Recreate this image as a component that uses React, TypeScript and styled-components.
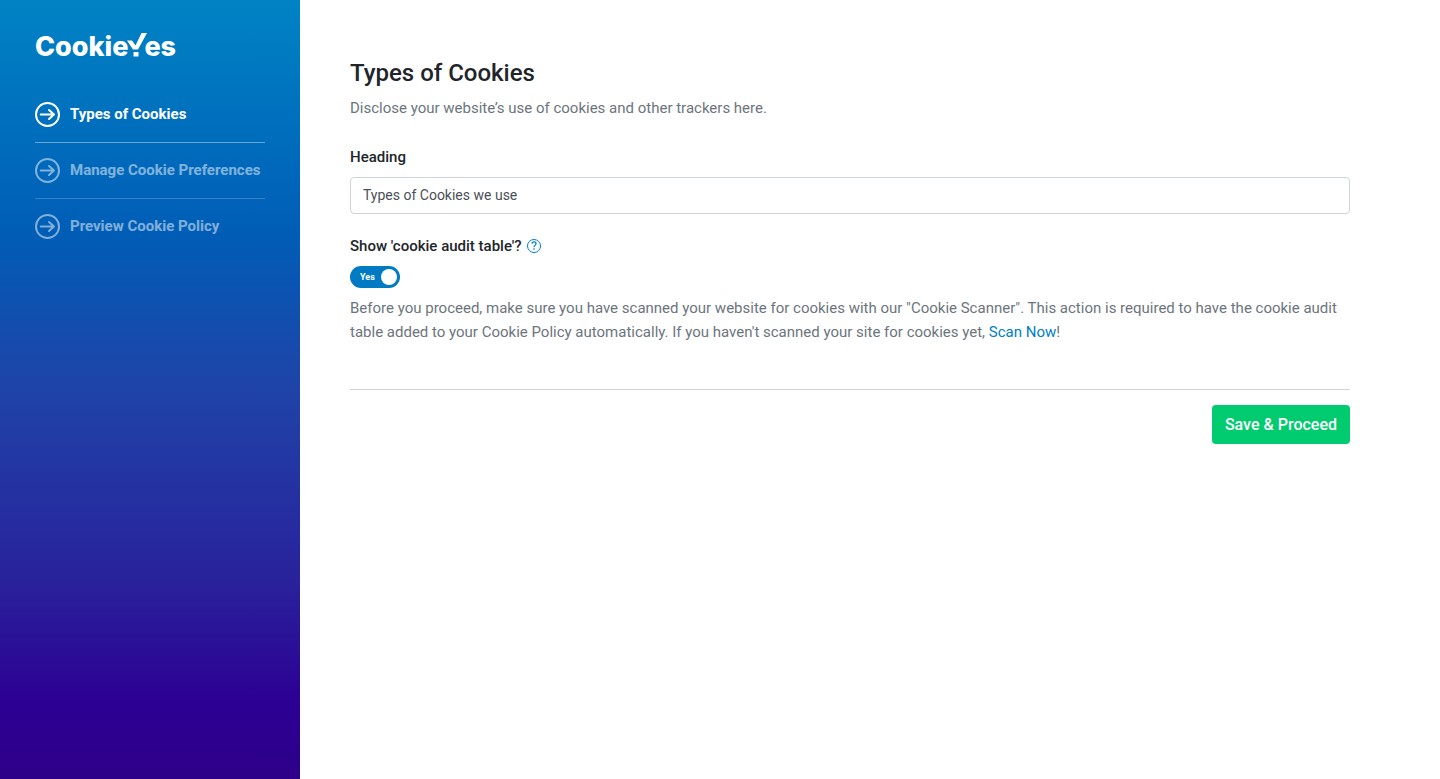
import { useState } from "react";
import styled, { createGlobalStyle } from "styled-components";

const GlobalStyle = createGlobalStyle`
  *, *::before, *::after { box-sizing: border-box; }
  body {
    margin: 0;
    background: #fff;
    color: #212529;
    font-family: Roboto, "Liberation Sans", sans-serif;
    font-size: 15px;
    line-height: 24px;
  }
`;

const Layout = styled.div`
  display: flex;
  min-height: 100vh;
`;

const Sidebar = styled.aside`
  flex: 0 0 300px;
  padding: 33px 35px;
  background: linear-gradient(180deg, #0083c5 0%, #005db6 30%, #1f43a8 50%, #29219b 75%, #2c0093 90%, #2e0089 100%);
`;

const Logo = styled.a`
  display: flex;
  align-items: center;
  height: 28px;
  margin-bottom: 26px;
  color: #fff;
  font-family: Inter, sans-serif;
  font-size: 27px;
  font-weight: 800;
  line-height: 28px;
  text-decoration: none;

  svg { display: block; flex: none; margin: 0 -4px 4px; }
`;

const Steps = styled.ol`
  margin: 0;
  padding: 0;
  list-style: none;
`;

const Step = styled.li<{ $active?: boolean }>`
  border-bottom: 1px solid rgba(255, 255, 255, ${(p) => (p.$active ? 0.4 : 0.2)});
  &:last-child { border-bottom: 0; }
`;

const StepLink = styled.a<{ $active?: boolean }>`
  display: flex;
  align-items: center;
  gap: 10px;
  padding: 15px 0;
  color: #fff;
  font-weight: 700;
  line-height: 25px;
  text-decoration: none;
  white-space: nowrap;
  opacity: ${(p) => (p.$active ? 1 : 0.5)};

  svg { display: block; flex: none; }
`;

const Main = styled.main`
  flex: 1;
  min-width: 0;
  padding: 58px 90px 50px 50px;
`;

const Title = styled.h1`
  margin: 0 0 8px;
  font-size: 24px;
  font-weight: 500;
  line-height: 30px;
`;

const Text = styled.p`
  margin: 0;
  color: #6c757d;
`;

const Link = styled.a`
  color: #0080c5;
  text-decoration: none;
`;

const Form = styled.form`
  display: flex;
  flex-direction: column;
  gap: 20px;
  margin-top: 25px;
`;

const LabelRow = styled.div`
  display: flex;
  align-items: center;
  gap: 5px;
  margin-bottom: 8px;
`;

const Label = styled.label`
  font-weight: 500;
`;

const Input = styled.input`
  display: block;
  width: 100%;
  height: 37px;
  padding: 5px 12px 6px;
  border: 1px solid #ced4da;
  border-radius: 4px;
  background: #fff;
  color: #495057;
  font: inherit;
  font-size: 14px;
`;

const HelpButton = styled.button`
  display: flex;
  padding: 0;
  border: 0;
  background: none;
  color: #0080c5;
  cursor: pointer;
`;

const Switch = styled.span`
  position: relative;
  display: flex;
  align-items: center;
  width: 50px;
  height: 22px;
  margin-bottom: 8px;
`;

const SwitchInput = styled.input`
  appearance: none;
  width: 50px;
  height: 22px;
  margin: 0;
  border-radius: 11px;
  background: #adb5bd;
  cursor: pointer;

  &::after {
    content: "";
    display: block;
    width: 16px;
    height: 16px;
    margin: 3px;
    border-radius: 50%;
    background: #fff;
  }
  &:checked { background: #007ac3; }
  &:checked::after { margin-left: 31px; }
`;

const SwitchText = styled.span<{ $on: boolean }>`
  position: absolute;
  left: ${(p) => (p.$on ? "10px" : "26px")};
  color: #fff;
  font-size: 9px;
  font-weight: 700;
  line-height: 22px;
  pointer-events: none;
`;

const Footer = styled.footer`
  display: flex;
  justify-content: flex-end;
  margin-top: 25px;
  padding-top: 15px;
  border-top: 1px solid #ced4da;
`;

const SaveButton = styled.button`
  padding: 8px 13px 7px;
  border: 0;
  border-radius: 4px;
  background: #00cb6f;
  color: #fff;
  font: 500 16px/24px Roboto, "Liberation Sans", sans-serif;
  cursor: pointer;
`;

const CircleArrow = () => (
  <svg width="25" height="25" viewBox="0 0 25 25" fill="none" stroke="currentColor" aria-hidden="true">
    <circle cx="12.5" cy="12.5" r="11.5" strokeWidth="2" />
    <path d="M5.7 12.5h13M14 8l5 4.5-5 4.5" strokeWidth="2" strokeLinecap="round" strokeLinejoin="round" />
  </svg>
);

const CheckMark = () => (
  <svg width="24" height="24" viewBox="0 0 24 24" fill="currentColor" aria-hidden="true">
    <path d="M3 7.5h5l3.500 5L17.500 0H23L14 16.500H9Z" />
    <path d="M9.500 19h5v4.500h-5Z" />
  </svg>
);

const QuestionIcon = () => (
  <svg width="14" height="14" viewBox="0 0 14 14" fill="none" stroke="currentColor" aria-hidden="true">
    <circle cx="7" cy="7" r="6.5" strokeWidth="1" />
    <path d="M5 4.800C5 3.600 5.800 2.900 7 2.900S9 3.600 9 4.700C9 6.200 7 6.200 7 8.200" strokeWidth="1.200" />
    <path d="M7 9.300v1.400" strokeWidth="1.300" />
  </svg>
);

const steps = ["Types of Cookies", "Manage Cookie Preferences", "Preview Cookie Policy"];

export default function App() {
  const [heading, setHeading] = useState("Types of Cookies we use");
  const [showTable, setShowTable] = useState(true);

  return (
    <Layout>
      <GlobalStyle />
      <Sidebar>
        <Logo href="#" aria-label="CookieYes">
          <span>Cookie</span>
          <CheckMark />
          <span>es</span>
        </Logo>
        <nav>
          <Steps>
            {steps.map((name, i) => (
              <Step key={name} $active={i === 0}>
                <StepLink href="#" $active={i === 0}>
                  <CircleArrow />
                  {name}
                </StepLink>
              </Step>
            ))}
          </Steps>
        </nav>
      </Sidebar>
      <Main>
        <Title>Types of Cookies</Title>
        <Text>Disclose your website’s use of cookies and other trackers here.</Text>
        <Form onSubmit={(e) => e.preventDefault()}>
          <div>
            <LabelRow>
              <Label htmlFor="heading">Heading</Label>
            </LabelRow>
            <Input id="heading" value={heading} onChange={(e) => setHeading(e.target.value)} />
          </div>
          <div>
            <LabelRow>
              <Label htmlFor="audit">Show 'cookie audit table'?</Label>
              <HelpButton type="button" aria-label="Help">
                <QuestionIcon />
              </HelpButton>
            </LabelRow>
            <Switch>
              <SwitchInput
                id="audit"
                type="checkbox"
                role="switch"
                checked={showTable}
                onChange={(e) => setShowTable(e.target.checked)}
              />
              <SwitchText $on={showTable}>{showTable ? "Yes" : "No"}</SwitchText>
            </Switch>
            <Text>
              Before you proceed, make sure you have scanned your website for cookies with our "Cookie Scanner". This
              action is required to have the cookie audit table added to your Cookie Policy automatically. If you
              haven't scanned your site for cookies yet, <Link href="#">Scan Now</Link>!
            </Text>
          </div>
          <Footer>
            <SaveButton type="submit">Save &amp; Proceed</SaveButton>
          </Footer>
        </Form>
      </Main>
    </Layout>
  );
}
